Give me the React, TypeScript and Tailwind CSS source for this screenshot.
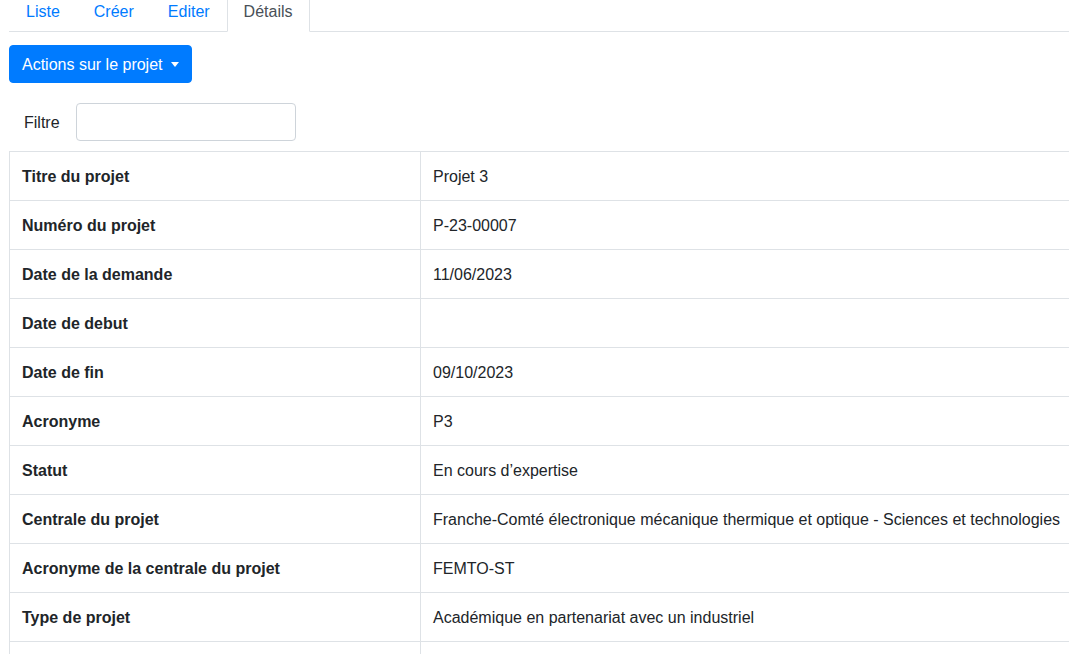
import React from "react";

const rows: [string, string][] = [
  ["Titre du projet", "Projet 3"],
  ["Numéro du projet", "P-23-00007"],
  ["Date de la demande", "11/06/2023"],
  ["Date de debut", ""],
  ["Date de fin", "09/10/2023"],
  ["Acronyme", "P3"],
  ["Statut", "En cours d\u2019expertise"],
  ["Centrale du projet", "Franche-Comté électronique mécanique thermique et optique - Sciences et technologies"],
  ["Acronyme de la centrale du projet", "FEMTO-ST"],
  ["Type de projet", "Académique en partenariat avec un industriel"],
  ["", ""],
];

export default function App() {
  const tabs = ["Liste", "Créer", "Editer"];
  return (
    <div
      className="w-[1069px] h-[654px] overflow-hidden bg-white text-[16px] leading-6 text-[#212529]"
      style={{ fontFamily: '"Liberation Sans", Arial, sans-serif' }}
    >
      <div className="pl-[9px]">
        <ul className="flex -mt-[10px] border-b border-[#dee2e6]">
          {tabs.map((t) => (
            <li key={t} className="-mb-px">
              <span className="block border border-transparent px-4 pt-[9px] pb-[7px] text-[#007bff]">{t}</span>
            </li>
          ))}
          <li className="-mb-px">
            <span className="block border border-[#dee2e6] border-b-white bg-white px-4 pt-[9px] pb-[7px] text-[#495057] rounded-t">
              Détails
            </span>
          </li>
        </ul>

        <div className="mt-[13px]">
          <button className="flex items-center h-[38px] pl-3 pr-[12px] pt-px rounded bg-[#007bff] border border-[#007bff] text-white">
            Actions sur le projet
            <span className="ml-[8px] -mt-px w-0 h-0 border-t-[5px] border-t-white border-x-[4.8px] border-x-transparent" />
          </button>
        </div>

        <div className="mt-[20px] flex items-center">
          <label className="ml-[15px] w-[52px] pt-[2px]">Filtre</label>
          <input className="h-[38px] w-[220px] rounded border border-[#ced4da] px-3 outline-none" />
        </div>

        <table className="mt-[10px] w-[1070px] border-collapse table-fixed">
          <tbody>
            {rows.map(([k, v], i) => (
              <tr key={i}>
                <th className="w-[411px] border border-[#dee2e6] px-3 pt-[13px] pb-[11px] text-left font-bold align-top">
                  {k || "\u00a0"}
                </th>
                <td className="border border-[#dee2e6] px-3 pt-[13px] pb-[11px] align-top whitespace-nowrap">
                  {v || "\u00a0"}
                </td>
              </tr>
            ))}
          </tbody>
        </table>
      </div>
    </div>
  );
}
